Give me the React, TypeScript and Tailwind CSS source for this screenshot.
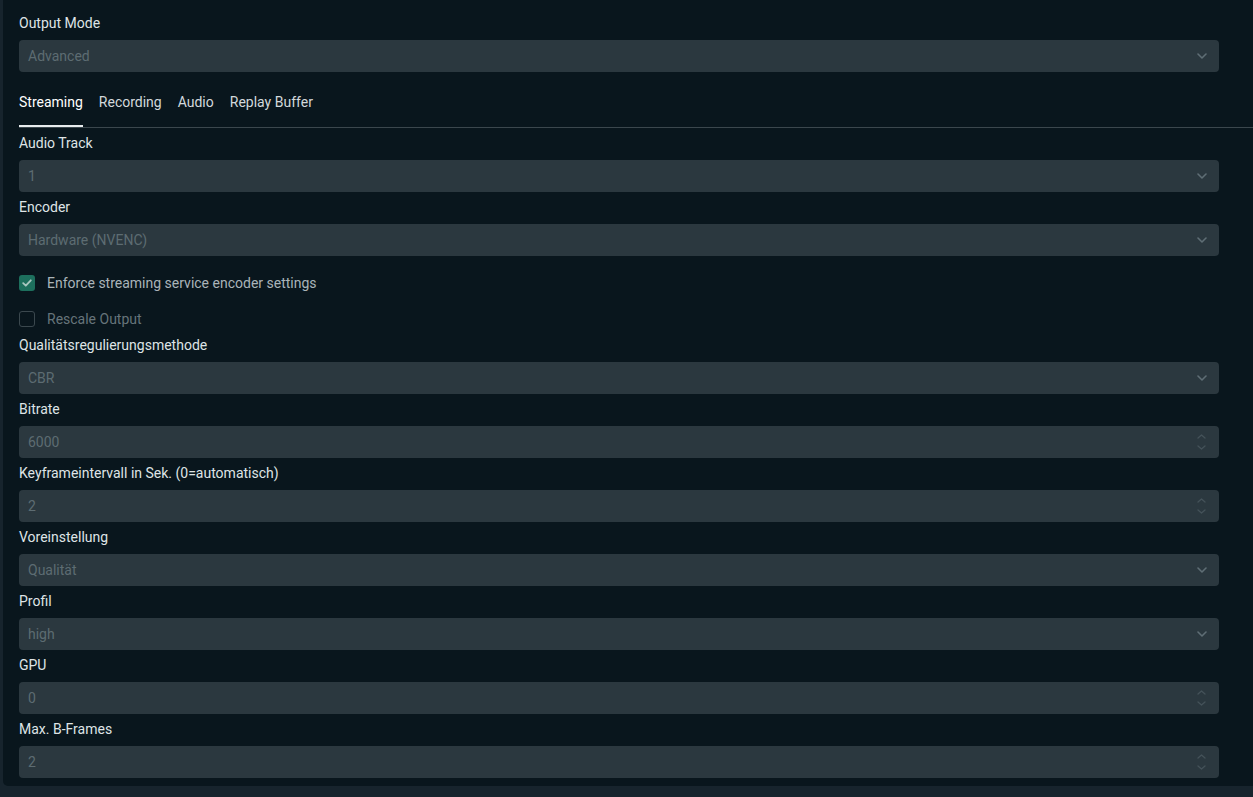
import React from "react";

type Field = { label: string; value: string; kind: "select" | "number" };

const FIELDS_TOP: Field[] = [
  { label: "Audio Track", value: "1", kind: "select" },
  { label: "Encoder", value: "Hardware (NVENC)", kind: "select" },
];

const FIELDS_BOTTOM: Field[] = [
  { label: "Qualitätsregulierungsmethode", value: "CBR", kind: "select" },
  { label: "Bitrate", value: "6000", kind: "number" },
  { label: "Keyframeintervall in Sek. (0=automatisch)", value: "2", kind: "number" },
  { label: "Voreinstellung", value: "Qualität", kind: "select" },
  { label: "Profil", value: "high", kind: "select" },
  { label: "GPU", value: "0", kind: "number" },
  { label: "Max. B-Frames", value: "2", kind: "number" },
];

const Chevron = () => (
  <svg width="10" height="6" viewBox="0 0 10 6" fill="none">
    <path d="M1 1l4 4 4-4" stroke="#5f6e75" strokeWidth="1.6" strokeLinecap="round" strokeLinejoin="round" />
  </svg>
);

const Spinner = () => (
  <div className="flex flex-col items-center gap-[6px] pr-[1px]">
    <svg width="9" height="5" viewBox="0 0 9 5" fill="none">
      <path d="M1 4l3.5-3 3.5 3" stroke="#445259" strokeWidth="1.3" strokeLinecap="round" strokeLinejoin="round" />
    </svg>
    <svg width="9" height="5" viewBox="0 0 9 5" fill="none">
      <path d="M1 1l3.5 3 3.5-3" stroke="#445259" strokeWidth="1.3" strokeLinecap="round" strokeLinejoin="round" />
    </svg>
  </div>
);

const FormField = ({ field }: { field: Field }) => (
  <div className="flex flex-col">
    <label className="mt-[5px] mb-[7px] leading-5 text-[14px] text-[#dfe4e6]">{field.label}</label>
    <div className="h-8 w-[1200px] rounded bg-[#2b383f] flex items-center justify-between pl-[9px] pr-[12px]">
      <span className="text-[14px] text-[#5d6c72]">{field.value}</span>
      {field.kind === "select" ? <Chevron /> : <Spinner />}
    </div>
  </div>
);

export default function App() {
  const tabs = ["Streaming", "Recording", "Audio", "Replay Buffer"];

  return (
    <div
      className="w-[1253px] h-[797px] bg-[#17242d] overflow-hidden"
      style={{ fontFamily: "Roboto, 'Liberation Sans', sans-serif" }}
    >
      <div className="ml-[3px] h-[786px] bg-[#09161d] rounded-bl-[5px] pl-4 flex flex-col">
        {/* Output mode */}
        <div className="pt-[8px]">
          <FormField field={{ label: "Output Mode", value: "Advanced", kind: "select" }} />
        </div>

        {/* Tabs */}
        <div className="mt-[20px] flex gap-4 border-b border-[#3b474d]">
          {tabs.map((t, i) => (
            <div
              key={t}
              className={`h-[35px] text-[14px] leading-5 ${
                i === 0 ? "text-white border-b-2 border-[#e8ecee]" : "text-[#d3d9dc]"
              }`}
            >
              {t}
            </div>
          ))}
        </div>

        {FIELDS_TOP.map((f) => (
          <FormField key={f.label} field={f} />
        ))}

        {/* Checkboxes */}
        <div className="mt-[18px] flex items-center gap-3 h-[18px]">
          <div className="w-4 h-4 rounded-[3px] bg-[#1d6f5d] flex items-center justify-center">
            <svg width="10" height="8" viewBox="0 0 10 8" fill="none">
              <path d="M1.2 4.2l2.6 2.5L8.8 1.3" stroke="#a9c7c0" strokeWidth="1.8" strokeLinecap="round" strokeLinejoin="round" />
            </svg>
          </div>
          <span className="text-[14px] text-[#aab4b9]">Enforce streaming service encoder settings</span>
        </div>
        <div className="mt-[18px] mb-[2px] flex items-center gap-3 h-[18px]">
          <div className="w-4 h-4 rounded-[3px] border border-[#3b484e]" />
          <span className="text-[14px] text-[#66747a]">Rescale Output</span>
        </div>

        {FIELDS_BOTTOM.map((f) => (
          <FormField key={f.label} field={f} />
        ))}
      </div>
    </div>
  );
}
